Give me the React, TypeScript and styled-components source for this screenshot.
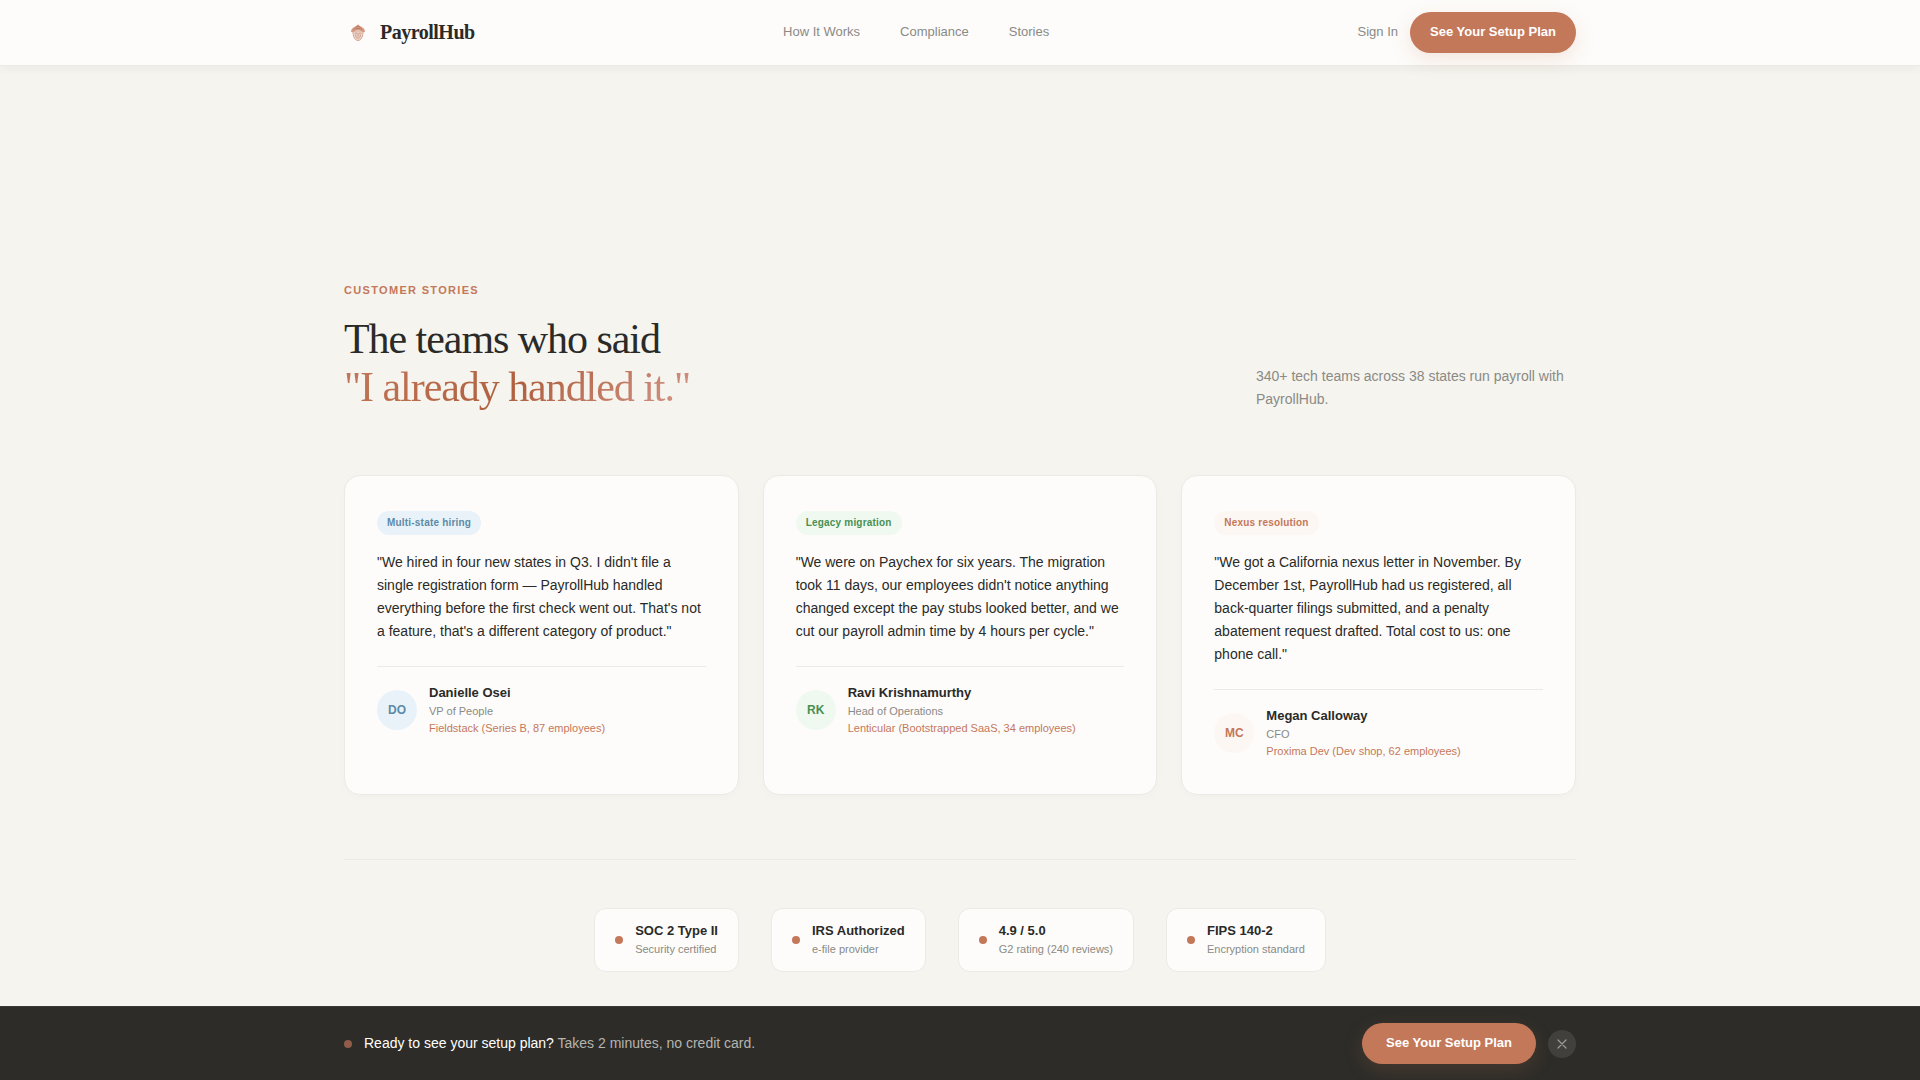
import React from "react";
import styled, { createGlobalStyle } from "styled-components";

const sans = `"Liberation Sans", Arial, Helvetica, sans-serif`;
const serif = `"Liberation Serif", "Times New Roman", serif`;

const color = {
  page: "#f5f4ef",
  surface: "#fdfcfa",
  ink: "#2a2a28",
  muted: "#8a8a86",
  accent: "#c4785a",
  line: "#ebeae5",
  bar: "#2d2c28",
};

const GlobalStyle = createGlobalStyle`
  *, *::before, *::after { box-sizing: border-box; }
  body {
    margin: 0;
    background: ${color.page};
    color: ${color.ink};
    font-family: ${sans};
    font-size: 14px;
    line-height: 23px;
  }
  h2, p, ul, blockquote, figure { margin: 0; padding: 0; }
  ul { list-style: none; }
  a { color: inherit; text-decoration: none; }
`;

const Container = styled.div`
  width: 100%;
  max-width: 1280px;
  margin: 0 auto;
  padding: 0 24px;
`;

const Header = styled.header`
  position: sticky;
  top: 0;
  z-index: 10;
  background: ${color.surface};
  border-bottom: 1px solid ${color.line};
  box-shadow: 0 2px 10px rgba(42, 42, 40, 0.05);
`;

const HeaderRow = styled(Container)`
  display: flex;
  align-items: center;
  justify-content: space-between;
  padding-top: 12px;
  padding-bottom: 12px;
`;

const Brand = styled.a`
  display: flex;
  align-items: center;
  gap: 8px;
  font-family: ${serif};
  font-size: 20px;
  font-weight: 700;
  letter-spacing: -0.025em;
`;

const NavLinks = styled.nav`
  display: flex;
  gap: 40px;
`;

const TextLink = styled.a`
  padding-bottom: 2px;
  color: ${color.muted};
  font-size: 13px;
  line-height: 19px;
`;

const Actions = styled.div`
  display: flex;
  align-items: center;
  gap: 12px;
`;

const PillButton = styled.button<{ $wide?: boolean }>`
  border: 0;
  border-radius: 999px;
  padding: 10px ${(p) => (p.$wide ? 24 : 20)}px 12px;
  background: ${color.accent};
  color: #fff;
  font-family: ${sans};
  font-size: 13px;
  font-weight: 700;
  line-height: 19px;
  box-shadow: 0 6px 20px rgba(196, 120, 90, 0.18);
  cursor: pointer;
`;

const Stories = styled.section`
  padding: 215px 0 108px;
`;

const Intro = styled.div`
  display: flex;
  align-items: flex-end;
  justify-content: space-between;
  gap: 32px;
  margin-bottom: 64px;
`;

const Eyebrow = styled.p`
  margin-bottom: 16px;
  color: ${color.accent};
  font-size: 11px;
  font-weight: 700;
  line-height: 18px;
  letter-spacing: 0.12em;
  text-transform: uppercase;
`;

const Title = styled.h2`
  font-family: ${serif};
  font-size: 42px;
  font-weight: 400;
  line-height: 48px;
  letter-spacing: -0.025em;
`;

const TitleAccent = styled.span`
  display: inline-block;
  background: linear-gradient(135deg, #c4785a 0%, #b0603f 50%, #d4968a 100%);
  background-clip: text;
  -webkit-background-clip: text;
  color: transparent;
`;

const Summary = styled.p`
  width: 320px;
  color: ${color.muted};
`;

const CardGrid = styled.div`
  display: grid;
  grid-template-columns: repeat(3, 1fr);
  gap: 24px;
`;

const Card = styled.figure`
  padding: 35px 32px 34px;
  background: ${color.surface};
  border: 1px solid ${color.line};
  border-radius: 16px;
  box-shadow: 0 2px 8px rgba(42, 42, 40, 0.02);
`;

type Tone = { fg: string; bg: string };

const Tag = styled.span<{ $tone: Tone }>`
  display: block;
  width: fit-content;
  margin-bottom: 16px;
  padding: 4px 10px;
  border-radius: 999px;
  background: ${(p) => p.$tone.bg};
  color: ${(p) => p.$tone.fg};
  font-size: 10px;
  font-weight: 700;
  line-height: 16px;
  letter-spacing: 0.02em;
`;

const Quote = styled.blockquote`
  margin-bottom: 23px;
`;

const Author = styled.figcaption`
  display: flex;
  align-items: center;
  gap: 12px;
  padding-top: 16px;
  border-top: 1px solid ${color.line};
`;

const Avatar = styled.span<{ $tone: Tone }>`
  display: grid;
  place-items: center;
  flex: none;
  width: 40px;
  height: 40px;
  border-radius: 50%;
  background: ${(p) => p.$tone.bg};
  color: ${(p) => p.$tone.fg};
  font-size: 12px;
  font-weight: 700;
`;

const Name = styled.div`
  font-size: 13px;
  font-weight: 700;
  line-height: 20px;
`;

const Detail = styled.div<{ $accent?: boolean }>`
  color: ${(p) => (p.$accent ? color.accent : color.muted)};
  font-size: 11px;
  line-height: 17px;
`;

const BadgeList = styled.ul`
  display: flex;
  flex-wrap: wrap;
  justify-content: center;
  gap: 32px;
  margin-top: 64px;
  padding-top: 48px;
  border-top: 1px solid ${color.line};
`;

const Badge = styled.li`
  display: flex;
  align-items: center;
  gap: 12px;
  padding: 12px 20px 13px;
  background: ${color.surface};
  border: 1px solid ${color.line};
  border-radius: 12px;
`;

const Dot = styled.span<{ $dim?: boolean }>`
  flex: none;
  width: 8px;
  height: 8px;
  border-radius: 50%;
  background: ${color.accent};
  opacity: ${(p) => (p.$dim ? 0.65 : 1)};
`;

const StickyBar = styled.aside`
  position: fixed;
  inset: auto 0 0;
  z-index: 10;
  background: ${color.bar};
  border-top: 1px solid #3a3935;
`;

const BarRow = styled(Container)`
  display: flex;
  align-items: center;
  gap: 12px;
  padding-top: 16px;
  padding-bottom: 16px;
`;

const BarText = styled.p`
  flex: 1;
  color: #b5b4b0;
`;

const BarLead = styled.span`
  color: #fff;
`;

const CloseButton = styled.button`
  display: grid;
  place-items: center;
  width: 28px;
  height: 28px;
  padding: 0;
  border: 0;
  border-radius: 50%;
  background: #41403c;
  color: #9a9995;
  cursor: pointer;
`;

const blue: Tone = { fg: "#5b8ba8", bg: "#eaf2f9" };
const green: Tone = { fg: "#4a8f52", bg: "#eff9f0" };
const coral: Tone = { fg: "#c4785a", bg: "#fdf7f4" };

const stories = [
  {
    tag: "Multi-state hiring",
    tone: blue,
    quote:
      "\"We hired in four new states in Q3. I didn't file a single registration form — PayrollHub handled everything before the first check went out. That's not a feature, that's a different category of product.\"",
    initials: "DO",
    name: "Danielle Osei",
    role: "VP of People",
    company: "Fieldstack (Series B, 87 employees)",
  },
  {
    tag: "Legacy migration",
    tone: green,
    quote:
      "\"We were on Paychex for six years. The migration took 11 days, our employees didn't notice anything changed except the pay stubs looked better, and we cut our payroll admin time by 4 hours per cycle.\"",
    initials: "RK",
    name: "Ravi Krishnamurthy",
    role: "Head of Operations",
    company: "Lenticular (Bootstrapped SaaS, 34 employees)",
  },
  {
    tag: "Nexus resolution",
    tone: coral,
    quote:
      '"We got a California nexus letter in November. By December 1st, PayrollHub had us registered, all back-quarter filings submitted, and a penalty abatement request drafted. Total cost to us: one phone call."',
    initials: "MC",
    name: "Megan Calloway",
    role: "CFO",
    company: "Proxima Dev (Dev shop, 62 employees)",
  },
];

const badges = [
  { title: "SOC 2 Type II", note: "Security certified" },
  { title: "IRS Authorized", note: "e-file provider" },
  { title: "4.9 / 5.0", note: "G2 rating (240 reviews)" },
  { title: "FIPS 140-2", note: "Encryption standard" },
];

const Logo = () => (
  <svg width="28" height="28" viewBox="0 0 28 28" fill="none" aria-hidden="true">
    <path d="M9 12c-.2 5 1.500 9.500 5 9.500s5.200-4.500 5-9.500z" fill="#edd6cc" stroke="#d8a794" strokeWidth="1" />
    <path d="M7 12.400C7.200 9.500 9.800 8.200 12 7L14 5.600 16 7c2.200 1.200 4.800 2.500 5 5.400-.8 1.200-2.200 1.200-3 .2-1.100-.9-2.500-1.300-4-1.300s-2.900.4-4 1.300c-.8 1-2.200 1-3-.2z" fill="#d39a84" />
    <path d="M11.500 8.600L14 7l2.500 1.600M9.500 10.600C12 9 16 9 18.500 10.600" stroke="#bd775c" strokeWidth=".9" />
    <path d="M11 14.200h2M15 14.200h2M11.800 16v1.500c0 2.200 4.400 2.200 4.400 0V16M14 14.800v2.400" stroke="#c99380" strokeWidth=".9" strokeLinecap="round" />
  </svg>
);

export default function App() {
  return (
    <>
      <GlobalStyle />
      <Header>
        <HeaderRow>
          <Brand href="#">
            <Logo />
            PayrollHub
          </Brand>
          <NavLinks>
            <TextLink href="#how">How It Works</TextLink>
            <TextLink href="#compliance">Compliance</TextLink>
            <TextLink href="#stories">Stories</TextLink>
          </NavLinks>
          <Actions>
            <TextLink href="#signin">Sign In</TextLink>
            <PillButton type="button">See Your Setup Plan</PillButton>
          </Actions>
        </HeaderRow>
      </Header>

      <main>
        <Stories id="stories">
          <Container>
            <Intro>
              <div>
                <Eyebrow>Customer Stories</Eyebrow>
                <Title>
                  The teams who said
                  <br />
                  <TitleAccent>"I already handled it."</TitleAccent>
                </Title>
              </div>
              <Summary>340+ tech teams across 38 states run payroll with PayrollHub.</Summary>
            </Intro>

            <CardGrid>
              {stories.map((s) => (
                <Card key={s.name}>
                  <Tag $tone={s.tone}>{s.tag}</Tag>
                  <Quote>{s.quote}</Quote>
                  <Author>
                    <Avatar $tone={s.tone}>{s.initials}</Avatar>
                    <div>
                      <Name>{s.name}</Name>
                      <Detail>{s.role}</Detail>
                      <Detail $accent>{s.company}</Detail>
                    </div>
                  </Author>
                </Card>
              ))}
            </CardGrid>

            <BadgeList>
              {badges.map((b) => (
                <Badge key={b.title}>
                  <Dot />
                  <div>
                    <Name>{b.title}</Name>
                    <Detail>{b.note}</Detail>
                  </div>
                </Badge>
              ))}
            </BadgeList>
          </Container>
        </Stories>
      </main>

      <StickyBar>
        <BarRow>
          <Dot $dim />
          <BarText>
            <BarLead>Ready to see your setup plan?</BarLead> Takes 2 minutes, no credit card.
          </BarText>
          <PillButton type="button" $wide>
            See Your Setup Plan
          </PillButton>
          <CloseButton type="button" aria-label="Dismiss">
            <svg width="10" height="10" viewBox="0 0 10 10" aria-hidden="true">
              <path d="M1 1l8 8M9 1L1 9" stroke="currentColor" strokeWidth="1.300" strokeLinecap="round" />
            </svg>
          </CloseButton>
        </BarRow>
      </StickyBar>
    </>
  );
}
